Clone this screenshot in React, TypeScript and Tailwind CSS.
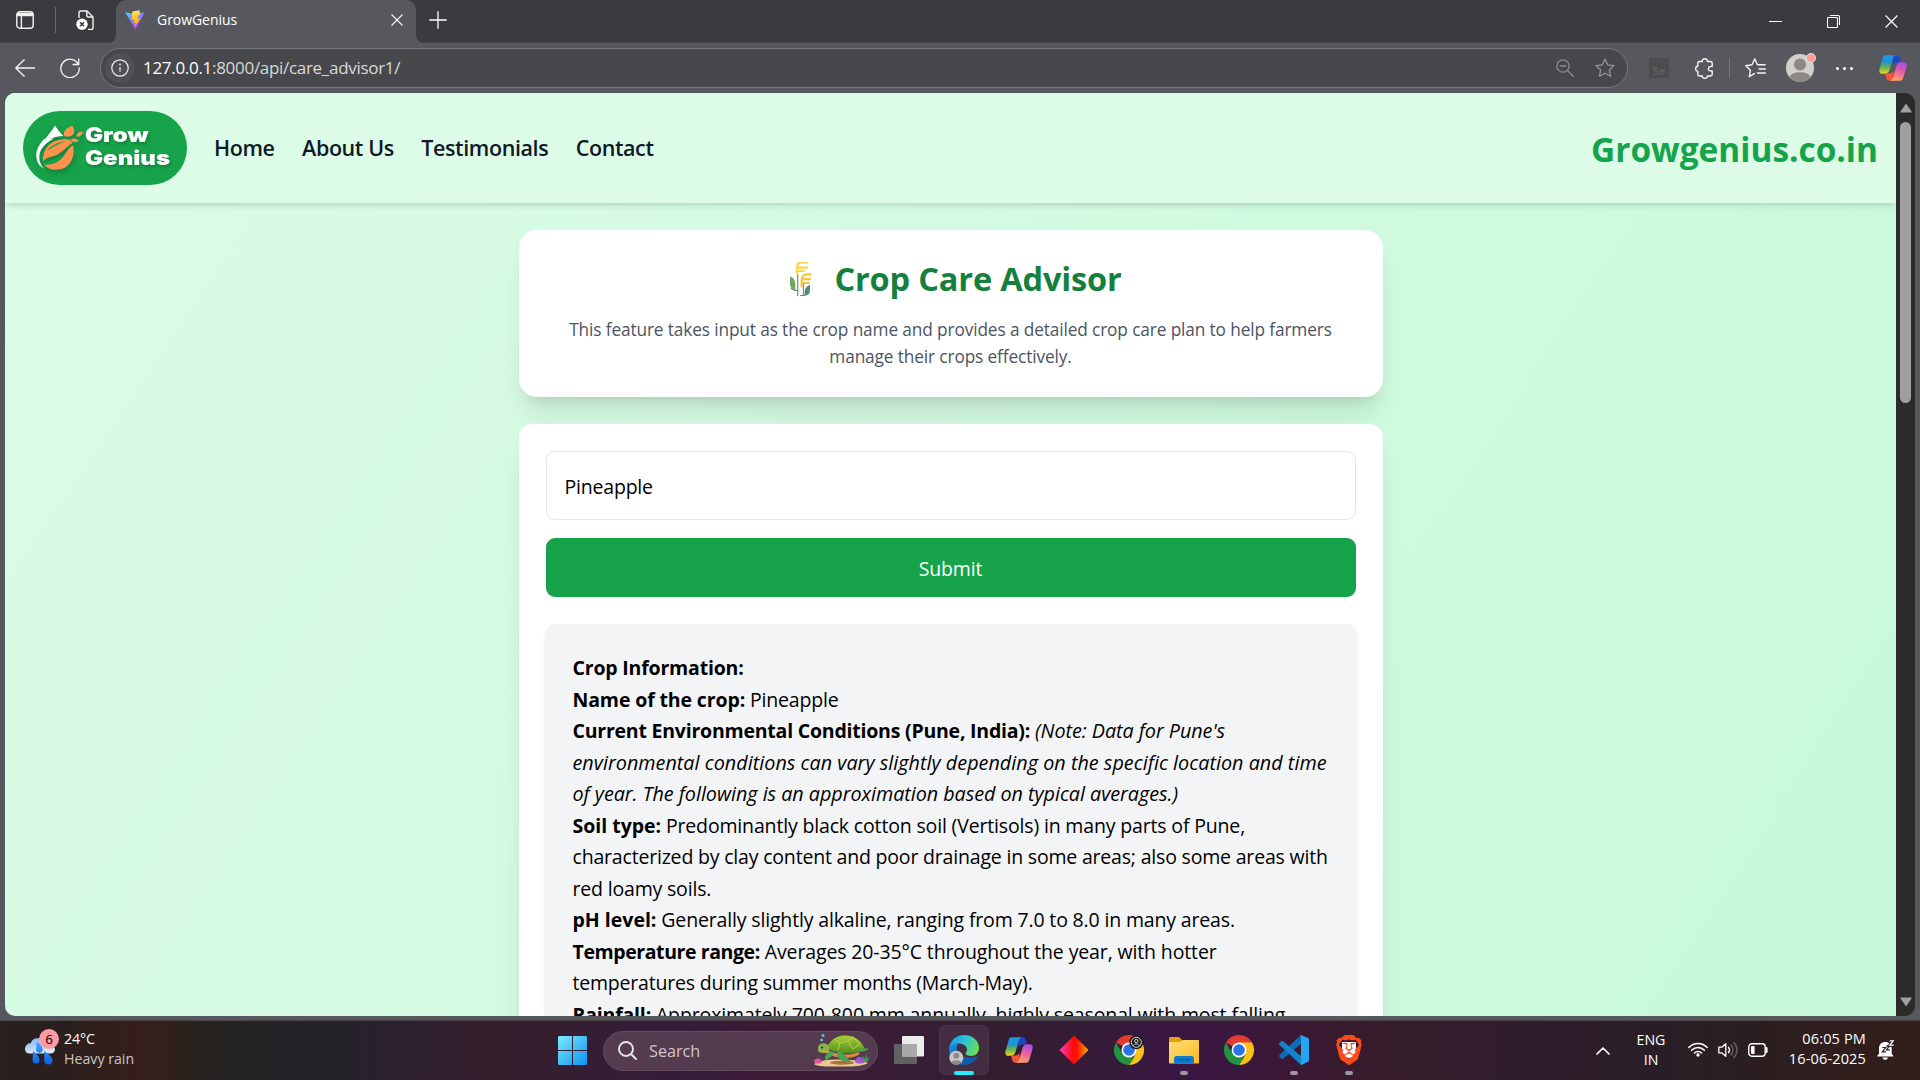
import React, { useId } from "react";
import { SiBrave } from "react-icons/si";

const ui = "font-['Open_Sans','Noto_Sans',sans-serif]";

/* ---------- browser icons ---------- */

const TabActionsIcon = () => (
  <svg viewBox="0 0 18 18" className="h-[18px] w-[18px]" fill="none" stroke="#f2f2f2" strokeWidth="1.4">
    <rect x="0.8" y="0.8" width="16.4" height="16.4" rx="3" />
    <path d="M1 1.8h16v3.4H1z" fill="#f2f2f2" stroke="none" />
    <path d="M5.4 5v12" />
  </svg>
);

const WorkspaceIcon = () => (
  <svg viewBox="0 0 20 21" className="h-[21px] w-5" fill="none" stroke="#f2f2f2" strokeWidth="1.4">
    <path d="M3 8V2.6C3 1.6 3.7 1 4.6 1H11l6 6v10.500c0 1-.7 1.900-1.800 1.900H12" />
    <path d="M10.800 1v4.500c0 .9.600 1.500 1.500 1.500H17" />
    <circle cx="6" cy="14.300" r="5.700" fill="#fff" stroke="none" />
    <path d="M4 12.300l4 4m0-4l-4 4" stroke="#333" />
  </svg>
);

const ViteIcon = () => {
  const id = useId();
  return (
    <svg viewBox="0 0 20 20" className="h-5 w-5">
      <defs>
        <linearGradient id={id + "a"} x1="0" y1="0" x2="0.6" y2="1">
          <stop offset="0" stopColor="#41d1ff" />
          <stop offset="1" stopColor="#bd34fe" />
        </linearGradient>
        <linearGradient id={id + "b"} x1="0.4" y1="0" x2="0.5" y2="1">
          <stop offset="0" stopColor="#ffea83" />
          <stop offset="0.3" stopColor="#ffcf26" />
          <stop offset="1" stopColor="#ffa800" />
        </linearGradient>
      </defs>
      <path d="M0.200 2.300L10 4l9.800-1.700L10.300 19.800z" fill={`url(#${id}a)`} />
      <path d="M14.700.2L7.300 1.500l-.6 8.600 2.600-.5-.8 3.700 2.200-.7-1 4.600 5.700-8.900-3 .5 1-3.500 1.700-.4z" fill={`url(#${id}b)`} />
    </svg>
  );
};

const CloseIcon = ({ className }: { className: string }) => (
  <svg viewBox="0 0 12 12" className={className} stroke="#f5f5f5" strokeWidth="1.2">
    <path d="M.5.5l11 11M11.500.5l-11 11" />
  </svg>
);

const CopilotIcon = () => {
  const id = useId();
  return (
    <svg viewBox="0 0 28 26" className="h-[26px] w-7">
      <defs>
        <linearGradient id={id + "a"} x1="0.3" y1="0" x2="0.3" y2="1">
          <stop offset="0" stopColor="#1b9de8" />
          <stop offset="0.35" stopColor="#1f8fd8" />
          <stop offset="0.65" stopColor="#5fb650" />
          <stop offset="1" stopColor="#f5d21c" />
        </linearGradient>
        <linearGradient id={id + "b"} x1="0.7" y1="0" x2="0.4" y2="1">
          <stop offset="0" stopColor="#a54ee8" />
          <stop offset="0.45" stopColor="#e55aa5" />
          <stop offset="1" stopColor="#ffa36b" />
        </linearGradient>
      </defs>
      <path d="M13 .3h4.500c1.900 0 2.800 1.200 3.300 2.800l1.200 4.400h-4.300c-2 0-3.200 1-3.800 3z" fill="#1c46c8" />
      <path d="M6.800.300H17c-1.700.3-2.500 1.500-3 3l-3.600 12c-.7 2.300-1.800 3.500-4 3.500H3.600C.7 18.800-.3 16.700.5 13.900L3.600 3.500C4.200 1.500 5 .300 6.800.300z" fill={`url(#${id}a)`} />
      <path d="M15 25.700h-4.500c-1.900 0-2.800-1.200-3.300-2.800L6 18.500h4.300c2 0 3.200-1 3.800-3z" fill="#f2573d" />
      <path d="M21.200 25.700H11c1.700-.3 2.500-1.500 3-3l3.600-12c.7-2.300 1.800-3.500 4-3.500h2.800c2.900 0 3.900 2.100 3.100 4.900l-3.100 10.400c-.6 2-1.400 3.200-3.200 3.200z" fill={`url(#${id}b)`} />
    </svg>
  );
};

function TabStrip() {
  return (
    <div className="flex h-[43px] border-b border-[#48494d] bg-[#3a3b3e]">
      <div className="flex w-[108px] items-center pb-[2px] pl-4">
        <TabActionsIcon />
        <div className="ml-[21px] h-[26px] w-px bg-[#6b6c70]" />
        <div className="ml-5">
          <WorkspaceIcon />
        </div>
      </div>
      <div className="flex h-[43px] w-2 items-end bg-[#57585d]">
        <div className="h-[43px] w-2 rounded-br-lg bg-[#3a3b3e]" />
      </div>
      <div className="flex h-[43px] w-[300px] items-center rounded-t-[10px] bg-[#57585d] pb-[3px] pl-[9px] pr-[13px]">
        <ViteIcon />
        <span className="ml-3 flex-1 text-[14px] leading-5 tracking-[-0.05px] text-white">GrowGenius</span>
        <CloseIcon className="h-3 w-3" />
      </div>
      <div className="flex h-[43px] w-2 bg-[#57585d]">
        <div className="h-[43px] w-2 rounded-bl-lg bg-[#3a3b3e]" />
      </div>
      <svg viewBox="0 0 18 18" className="ml-[5px] mt-[11px] h-[18px] w-[18px]" stroke="#fff" strokeWidth="1.300">
        <path d="M9 .3v17.400M.3 9h17.400" />
      </svg>
      <div className="ml-auto flex items-center pr-[22px]">
        <div className="mr-[45px] h-px w-[13px] bg-white" />
        <svg viewBox="0 0 13 13" className="mr-[45px] h-[13px] w-[13px]" fill="none" stroke="#fff" strokeWidth="1.100">
          <rect x="0.500" y="2.500" width="10" height="10" rx="1" />
          <path d="M2.800.5H11c.9 0 1.500.6 1.500 1.500v8" />
        </svg>
        <CloseIcon className="h-[13px] w-[13px]" />
      </div>
    </div>
  );
}

const Star = ({ stroke }: { stroke: string }) => (
  <svg viewBox="0 0 20 20" className="h-5 w-5" fill="none" stroke={stroke} strokeWidth="1.300" strokeLinejoin="round">
    <path d="M10 1l2.700 5.800 6.300.8-4.600 4.400 1.200 6.300L10 15.200l-5.600 3.100L5.600 12 1 7.600l6.300-.8z" />
  </svg>
);

function Toolbar() {
  return (
    <div className="flex h-[50px] items-center bg-[#57585d] pl-[15px]">
      <svg viewBox="0 0 20 18" className="h-[18px] w-5" fill="none" stroke="#f5f5f5" strokeWidth="1.300" strokeLinecap="round" strokeLinejoin="round">
        <path d="M9.200.8L.8 9l8.400 8.200M.8 9h18.700" />
      </svg>
      <svg viewBox="0 0 20 20" className="ml-[25px] h-5 w-5" fill="none" stroke="#f5f5f5" strokeWidth="1.300" strokeLinecap="round">
        <path d="M18.300 6.400A9.200 9.200 0 1 0 19.200 10M18.700.9v5.600h-5.600" />
      </svg>
      <div className="ml-5 flex h-10 w-[1528px] items-center rounded-full border border-[#77787c] bg-[#47484b] pl-1">
        <div className="flex h-[30px] w-[30px] items-center justify-center rounded-full bg-[#505155]">
          <svg viewBox="0 0 18 18" className="h-[18px] w-[18px]" fill="none" stroke="#f0f0f0" strokeWidth="1.200">
            <circle cx="9" cy="9" r="8.200" />
            <path d="M9 8v4.800" />
            <circle cx="9" cy="5.500" r="0.900" fill="#f0f0f0" stroke="none" />
          </svg>
        </div>
        <span className="ml-2 flex-1 text-[17px] leading-6 tracking-[-0.3px] text-[#d8d8da]">
          <span className="text-white">127.0.0.1</span>:8000/api/care_advisor1/
        </span>
        <svg viewBox="0 0 18 18" className="mr-[21px] h-[18px] w-[18px]" fill="none" stroke="#8c8d90" strokeWidth="1.300" strokeLinecap="round">
          <circle cx="7" cy="7" r="6.200" />
          <path d="M4.200 7h5.600M11.600 11.600l5.600 5.600" />
        </svg>
        <div className="mr-3">
          <Star stroke="#95969a" />
        </div>
      </div>
      <div className="ml-[21px] h-5 w-5 bg-[#4c4d4f] pt-[6px] text-center text-[11px] font-bold leading-[13px] text-[#5d5e63]">Se</div>
      <svg viewBox="0 0 20 21" className="ml-[26px] h-[21px] w-5" fill="none" stroke="#f5f5f5" strokeWidth="1.400" strokeLinejoin="round">
        <path d="M4.300 3.500h3c-.2-1.600.8-2.700 2.500-2.700s2.700 1.100 2.500 2.700h3.200c1 0 1.700.7 1.700 1.700v3.300c-2.600-.4-3.800.7-3.800 2.200s1.200 2.600 3.800 2.200v3.400c0 1-.7 1.700-1.700 1.700h-3.200c.2 1.400-.8 2.300-2.500 2.300S7.100 19.400 7.300 18h-3c-1 0-1.500-.7-1.500-1.700v-3C1.300 13.300.700 12.300.700 10.700s.7-2.500 2.100-2.500V5.200c0-1 .5-1.700 1.500-1.700z" />
      </svg>
      <div className="ml-[14px] h-5 w-px bg-[#77787c]" />
      <svg viewBox="0 0 21 20" className="ml-[15px] h-5 w-[21px]" fill="none" stroke="#f5f5f5" strokeWidth="1.400" strokeLinecap="round" strokeLinejoin="round">
        <path d="M9.300 15.600l-5 3 1.100-6.300L.8 7.700l6.200-.9L9.800 1l2.700 5.800h7.700M14 11h6.300M12.500 15h7.800" />
      </svg>
      <div className="relative ml-5 h-7 w-7">
        <svg viewBox="0 0 28 28" className="h-7 w-7">
          <circle cx="14" cy="14" r="14" fill="#d2d0cd" />
          <circle cx="14" cy="10.500" r="6" fill="#8c8885" />
          <path d="M3.300 23c1.500-3 5.300-4.700 10.700-4.700S23.200 20 24.700 23A14 14 0 0 1 3.300 23z" fill="#8c8885" />
        </svg>
        <div className="absolute -right-[2px] -top-[1px] h-[10px] w-[10px] rounded-full border border-[#e8dcdc] bg-[#ff9b98]" />
      </div>
      <div className="ml-[22px] flex gap-[4px]">
        <div className="h-[3px] w-[3px] rounded-full bg-white" />
        <div className="h-[3px] w-[3px] rounded-full bg-white" />
        <div className="h-[3px] w-[3px] rounded-full bg-white" />
      </div>
      <div className="ml-auto mr-[13px]">
        <CopilotIcon />
      </div>
    </div>
  );
}

/* ---------- web page ---------- */

function Logo() {
  return (
    <div className="flex h-[74px] w-[164px] items-center rounded-full bg-[#16a34a] pl-3">
      <svg viewBox="0 0 48 46" className="h-[46px] w-12 shrink-0 drop-shadow-[1px_3px_3px_rgba(0,0,0,0.2)]">
        <path d="M20 .5c2.500 4 5.500 7.500 8.500 10.500C19 11 12 14.500 6 20.500 9 14.500 15 8.500 20 .5z" fill="#fff" />
        <path d="M9 14C4 19.500 1 25 1.300 31c.2 6 3.200 10.200 7.700 12.800-3-3.300-5-7.300-4.700-12.300C4.600 24 10 18 19 13.500z" fill="#fff" />
        <path d="M8.500 30.500C10 20 19 14.500 30 14c4 0 6.500 1.500 7.500 4C30 22.500 27 29 17 31.500c-4 1-7 2-9 5-.3-2-.3-4 .5-6z" fill="#ff914d" />
        <path d="M12 26c4-5.500 10-8.500 19-10-8 3-13 6-19 10z" fill="#16a34a" />
        <path d="M38 20c2 9-1 19-9.500 23.300C22 46 13 45 9 39.500c6-.5 10 .5 16-4.500 5-4.500 7-10.500 13-15z" fill="#ff914d" />
        <path d="M8 38c8-2.500 15-3 19-9-2 6-8 10-17 11z" fill="#16a34a" />
        <path d="M29.500 11C27.500 7 30.500 3.500 37 .5c3 3.500 3.200 8-.5 10.200-2.500 1.300-5 1.300-7 .3z" fill="#ff914d" />
        <path d="M41.500 11.500c.5-4 3-5 6.500-4.700-1 3.500-3 5.500-6.500 4.700zM35.500 14.300c3.500-1.500 6.500-1 8.500 2-4 1.500-6.500 1-8.500-2z" fill="#ff914d" />
      </svg>
      <div className="ml-[2px] mb-[2px] origin-left scale-x-[1.2] font-['Inter',sans-serif] text-[20px] font-black leading-[23px] text-white [text-shadow:1px_2px_3px_rgba(0,0,0,0.22)]">
        <div>Grow</div>
        <div>Genius</div>
      </div>
    </div>
  );
}

const navItems = ["Home", "About Us", "Testimonials", "Contact"];

function SiteHeader() {
  return (
    <header className="relative flex h-[110px] items-center bg-[#dcfce7] pl-[18px] pr-[18px] shadow-[0_4px_7px_-1px_rgba(0,0,0,0.1),0_2px_4px_-2px_rgba(0,0,0,0.1)]">
      <Logo />
      <nav className="ml-[27px] flex gap-[27.500px] text-[21.5px] font-semibold tracking-[-0.4px] text-[#111827]">
        {navItems.map((item) => (
          <a key={item}>{item}</a>
        ))}
      </nav>
      <div className="ml-auto mt-px text-[33.4px] font-bold leading-[40px] text-[#16a34a]">Growgenius.co.in</div>
    </header>
  );
}

const WheatIcon = () => (
  <svg viewBox="0 0 24 34" className="h-[34px] w-6" fill="none">
    <path d="M8.700 12v22M14.500 22v11" stroke="#6aa47c" strokeWidth="1.300" />
    <path d="M8.200 13V5c0-3 2-4.600 5-4.600h6M8.800 5.600h10.200M8.800 9h6.600" stroke="#fcd34d" strokeWidth="2.200" />
    <path d="M12.700 25v-7c0-3 2-5.600 5-5.600h4.800M13 17.200h9M13 21h7.500" stroke="#fbc23c" strokeWidth="2.200" />
    <path d="M1 14.500c3.500 1 5 3.500 5.300 7v6.700C3 27.500 1 25.500 1 22z" fill="#6faa5c" />
    <path d="M21 23c-3.500 1-5 3.500-5.300 7v3.500c3.300-.7 5.300-2.500 5.300-6z" fill="#4f8a80" />
    <path d="M2 26c1 2 3.500 2.500 6.500 2.500M11 33.500c4 .2 8-.5 9.500-3" stroke="#5b9479" strokeWidth="1.200" />
  </svg>
);

const B = ({ children, className = "tracking-[-0.19px]" }: { children: React.ReactNode; className?: string }) => (
  <strong className={"text-[19.5px] font-bold " + className}>{children}</strong>
);
const I = ({ children, className = "tracking-[0.03px]" }: { children: React.ReactNode; className?: string }) => (
  <em className={"text-[19.75px] italic " + className}>{children}</em>
);

function CarePlan() {
  return (
    <div className="mt-[27px] whitespace-nowrap rounded-[9px] bg-[#f3f4f6] px-[27px] pb-[27px] pt-7 text-[19.5px] leading-[31.500px] tracking-[-0.18px] text-black shadow-[0_4px_7px_-1px_rgba(0,0,0,0.1),0_2px_4px_-2px_rgba(0,0,0,0.1)]">
      <p><B>Crop Information:</B></p>
      <p><B className="tracking-[-0.13px]">Name of the crop:</B> Pineapple</p>
      <p><B className="tracking-[-0.22px]">Current Environmental Conditions (Pune, India):</B> <I className="tracking-[-0.04px]">(Note: Data for Pune's</I></p>
      <p><I>environmental conditions can vary slightly depending on the specific location and time</I></p>
      <p><I className="tracking-[-0.03px]">of year. The following is an approximation based on typical averages.)</I></p>
      <p><B className="tracking-[-0.02px]">Soil type:</B> <span className="tracking-[-0.16px]">Predominantly black cotton soil (Vertisols) in many parts of Pune,</span></p>
      <p className="tracking-[-0.19px]">characterized by clay content and poor drainage in some areas; also some areas with</p>
      <p>red loamy soils.</p>
      <p><B className="tracking-[0px]">pH level:</B> <span className="tracking-[-0.16px]">Generally slightly alkaline, ranging from 7.0 to 8.0 in many areas.</span></p>
      <p><B className="tracking-[-0.41px]">Temperature range:</B> <span className="tracking-[-0.13px]">Averages 20-35°C throughout the year, with hotter</span></p>
      <p className="tracking-[-0.2px]">temperatures during summer months (March-May).</p>
      <p><B>Rainfall:</B> <span className="tracking-[-0.13px]">Approximately 700-800 mm annually, highly seasonal with most falling</span></p>
    </div>
  );
}

const cardShadow = "shadow-[0_22px_28px_-6px_rgba(0,0,0,0.1),0_9px_11px_-7px_rgba(0,0,0,0.1)]";

function Page() {
  return (
    <div className="h-[2840px] bg-linear-to-br from-[#dcfce7] to-[#bbf7d0]">
      <SiteHeader />
      <main className="mx-auto mt-[27px] w-[864px]">
        <section className={"h-[167px] rounded-[18px] bg-white pt-[27px] text-center " + cardShadow}>
          <h1 className="flex h-[43px] items-center justify-center gap-[21px] pl-[10px] text-[32.5px] font-bold tracking-[-0.16px] text-[#15803d]">
            <WheatIcon />
            <span className="mt-[2px]">Crop Care Advisor</span>
          </h1>
          <p className="mt-4 text-[17.250px] leading-[27px] tracking-[-0.12px] text-[#4b5563]">
            This feature takes input as the crop name and provides a detailed crop care plan to help farmers
            <br />
            manage their crops effectively.
          </p>
        </section>
        <section className={"mt-[27px] h-[900px] rounded-[13.5px] bg-white p-[27px] " + cardShadow}>
          <div className="flex h-[69px] items-center rounded-[9px] border border-[#e5e7eb] pl-[18px] pt-[2px] text-[19.5px] tracking-[-0.2px] text-black">
            Pineapple
          </div>
          <button className="mt-[18px] block h-[59px] w-full rounded-[9px] bg-[#16a34a] pt-[3px] text-[19.5px] tracking-[-0.17px] text-white">
            Submit
          </button>
          <CarePlan />
        </section>
      </main>
    </div>
  );
}

function Scrollbar() {
  return (
    <div className="flex w-[19px] flex-col items-center bg-[#2b2b2b]">
      <svg viewBox="0 0 12 10" className="mt-[10px] h-[10px] w-3">
        <path d="M6 .5L11.500 8.500c.3.600 0 1-.6 1H1.100c-.6 0-.9-.4-.6-1z" fill="#9f9f9f" />
      </svg>
      <div className="mt-[9px] h-[281px] w-[11px] rounded-full bg-[#9f9f9f]" />
      <svg viewBox="0 0 12 10" className="mb-[9px] mt-auto h-[10px] w-3">
        <path d="M6 9.500L.5 1.500c-.3-.6 0-1 .6-1h9.800c.6 0 .9.4.6 1z" fill="#9f9f9f" />
      </svg>
    </div>
  );
}

/* ---------- taskbar ---------- */

const WeatherIcon = () => {
  const id = useId();
  return (
    <svg viewBox="0 0 30 32" className="h-8 w-[30px]">
      <defs>
        <linearGradient id={id + "c"} x1="0" y1="0" x2="0.3" y2="1">
          <stop offset="0" stopColor="#7fb0f2" />
          <stop offset="1" stopColor="#dbe7fa" />
        </linearGradient>
        <linearGradient id={id + "d"} x1="0" y1="0" x2="0" y2="1">
          <stop offset="0" stopColor="#47a0ff" />
          <stop offset="1" stopColor="#0b62e6" />
        </linearGradient>
      </defs>
      <path d="M6 10C7 5.500 11 5 15 5h10l5 11c0 3-2 4.500-5 4.500H5C2 20.500 0 19 0 16s2.500-6 6-6z" fill={`url(#${id}c)`} />
      <path d="M11.500 9c4 2 6 4.500 6 7.500a3.200 3.200 0 0 1-6.400 0zM8 18c4 3 6.600 6 6.600 9a3.500 3.500 0 0 1-7 0zM19 18c5 3.500 8.500 6 8.500 9.500a4 4 0 0 1-8.200 0z" fill={`url(#${id}d)`} />
    </svg>
  );
};

const WindowsIcon = () => {
  const id = useId();
  return (
    <svg viewBox="0 0 29 29" className="h-[29px] w-[29px]">
      <linearGradient id={id} x1="0" y1="0" x2="29" y2="29" gradientUnits="userSpaceOnUse">
        <stop offset="0" stopColor="#7beefd" />
        <stop offset="1" stopColor="#0e90f0" />
      </linearGradient>
      <path d="M1 0h13v14H0V1zM15 0h13l1 1v13H15zM0 15h14v14H1l-1-1zM15 15h14v13l-1 1H15z" fill={`url(#${id})`} />
    </svg>
  );
};

const TurtleArt = () => {
  const id = useId();
  return (
    <svg viewBox="0 0 56 34" className="h-[34px] w-14">
      <linearGradient id={id} x1="0" y1="0" x2="0" y2="1">
        <stop offset="0" stopColor="#a9cf3a" />
        <stop offset="1" stopColor="#4f8f22" />
      </linearGradient>
      <path d="M0 30c6-4 16-5 28-4.500S50 27 54 29c-4 3-14 3.500-27 3.500S4 33 0 30z" fill="#edc78e" />
      <ellipse cx="28" cy="28.700" rx="12" ry="2" fill="#a8723f" />
      <path d="M12 16c8 2 18 8 32 2l2 2c-8 6-24 5-34-1z" fill="#d98a3c" />
      <path d="M13 13C18 3 26 1 33 1.500 42 2 48 8 51 15c-6 5-30 7-38-2z" fill={`url(#${id})`} />
      <path d="M20 5l6 4 8-2 6-4M26 9l-2 7M34 7l5 8M40 4l6 6-7 5" fill="none" stroke="#c6d544" strokeWidth="0.900" />
      <path d="M24 17c5 1 8 6 13 10.500-6 1.500-13-1-14-8zM44 15c4 0 9 0 10-1.500 1 3-5 5-10 3.500zM16 17c-4 3-6 6-4.500 9C16 25 19 21 20 18z" fill="#46a352" />
      <path d="M4 13c1-4 6-5 10-2 2 1.500 2 5 0 7-3 2-9 1-10-1z" fill="#8db04a" />
      <circle cx="8" cy="13.500" r="1.100" fill="#20351a" />
      <path d="M9 17c3 1.500 4 1.500 6 0" stroke="#e59a4a" strokeWidth="1.500" fill="none" />
      <circle cx="9" cy="1.600" r="1.500" fill="#56c8e8" />
      <circle cx="7.600" cy="6" r="1.300" fill="#6ad6f2" />
      <path d="M0 28c-.3-4 7-5 8 0-2 2-6 2-8 0z" fill="#e0559a" />
      <path d="M41 28c0-6 8-7 10 0-3 2-7 2-10 0z" fill="#a05ccd" />
      <path d="M50 27l-2-6 3 4 1-6 1 6 3-3-3 6z" fill="#39a35c" />
    </svg>
  );
};

const TaskViewIcon = () => (
  <svg viewBox="0 0 30 28" className="h-7 w-[30px]">
    <rect x="0" y="8" width="23" height="20" rx="1" fill="#5f6163" />
    <rect x="8" y="0" width="22" height="20.500" rx="1" fill="#ececec" />
    <path d="M8 8h15v12.500H8z" fill="#a9a9ab" />
  </svg>
);

const EdgeIcon = () => {
  const id = useId();
  return (
    <svg viewBox="0 0 30 30" className="h-[30px] w-[30px]">
      <defs>
        <linearGradient id={id + "a"} x1="0" y1="0.3" x2="1" y2="0.6">
          <stop offset="0" stopColor="#1e9be8" />
          <stop offset="0.500" stopColor="#2cc3d5" />
          <stop offset="1" stopColor="#6ee04a" />
        </linearGradient>
        <linearGradient id={id + "b"} x1="0" y1="0" x2="1" y2="1">
          <stop offset="0" stopColor="#1b8fe0" />
          <stop offset="1" stopColor="#0c4fa0" />
        </linearGradient>
      </defs>
      <path d="M0 14C1 5.500 7 0 15 0c9 0 15 6 15 13 0 5-3.500 8-8 8-3.500 0-5.500-1-5.500-2.500 0-1 1.500-1.500 1.500-4C18 11 14 8.500 9.500 8.500 5 8.500 1 11 0 14z" fill={`url(#${id}a)`} />
      <path d="M0 15c0-4 4-7 9.500-6.500C6 12 8 19 13.500 21.500 19 24 25 22.500 28.500 21 26 26.500 21 30 15 30 6.500 30 0 23 0 15z" fill={`url(#${id}b)`} />
      <path d="M10.500 17c0 7 8 10 18 4-3 6-8 8-13 7.500-4-1-7-7-5-11.500z" fill="#0d5cab" />
      <circle cx="7.300" cy="22.800" r="7" fill="#c9c8c6" />
      <circle cx="7.300" cy="20.700" r="2.900" fill="#8c8885" />
      <path d="M2.300 27.500c1-3 9-3 10 0a7 7 0 0 1-10 0z" fill="#8c8885" />
    </svg>
  );
};

const DiamondIcon = () => {
  const id = useId();
  return (
    <svg viewBox="0 0 30 30" className="h-[30px] w-[30px]">
      <linearGradient id={id} x1="0" y1="0" x2="1" y2="0">
        <stop offset="0" stopColor="#ff3cc0" />
        <stop offset="0.450" stopColor="#ff0a10" />
        <stop offset="0.600" stopColor="#ff1000" />
        <stop offset="1" stopColor="#ffb000" />
      </linearGradient>
      <path d="M15 .5L29.500 15 15 29.500.5 15z" fill={`url(#${id})`} />
    </svg>
  );
};

const ChromeIcon = ({ badge }: { badge?: boolean }) => (
  <svg viewBox="0 0 30 30" className="h-[30px] w-[30px] overflow-visible">
    <path d="M15 15L2 7.500A15 15 0 0 1 28 7.500z" fill="#e33b2e" />
    <path d="M15 7.500h13A15 15 0 0 1 15 30l6.500-11.300z" fill="#fbc116" />
    <path d="M2 7.500l6.500 11.300L15 22.500l6 -1L15 30A15 15 0 0 1 2 7.500z" fill="#229342" />
    <circle cx="15" cy="15" r="7.500" fill="#fff" />
    <circle cx="15" cy="15" r="5.800" fill="#2a73e8" />
    {badge && (
      <g>
        <circle cx="22.300" cy="7.300" r="7" fill="#1d1d1f" />
        <circle cx="22.300" cy="7.300" r="5" fill="none" stroke="#d5d5d5" strokeWidth="1" />
        <circle cx="22.300" cy="6" r="1.700" fill="none" stroke="#d5d5d5" />
        <path d="M19.300 10.600c1-2.200 5-2.200 6 0" fill="none" stroke="#d5d5d5" />
      </g>
    )}
  </svg>
);

const FolderIcon = () => {
  const id = useId();
  return (
    <svg viewBox="0 0 30 27" className="h-[27px] w-[30px]">
      <linearGradient id={id} x1="0" y1="0" x2="1" y2="1">
        <stop offset="0" stopColor="#ffdf7a" />
        <stop offset="1" stopColor="#fbb81c" />
      </linearGradient>
      <path d="M0 1.500C0 .6.600 0 1.500 0H10l4 4h14v5H0z" fill="#e3a00a" />
      <path d="M0 5h11l3-2h15c.6 0 1 .4 1 1v21.500c0 .6-.4 1-1 1H1c-.6 0-1-.4-1-1z" fill={`url(#${id})`} />
      <path d="M5 26.500V22c0-1.800 1-3 2.800-3h14.400c1.800 0 2.800 1.200 2.800 3v4.500z" fill="#0c7bd0" />
      <path d="M9 22.700h12" stroke="#0a4f8f" strokeWidth="1.200" strokeLinecap="round" />
    </svg>
  );
};

const CodeIcon = () => (
  <svg viewBox="0 0 30 30" className="h-[30px] w-[30px]">
    <path d="M22 0v9L4 23.800c-.5.400-1.100.4-1.600 0L.500 22c-.6-.6-.6-1.300 0-1.900z" fill="#0b6fb8" />
    <path d="M22 30v-9L4 6.200c-.5-.4-1.100-.4-1.600 0L.5 8c-.6.6-.6 1.300 0 1.900z" fill="#1584cf" />
    <path d="M21.500.2c.4-.2.900-.2 1.300 0l6 2.800c.7.400 1.200 1 1.200 1.900v20.200c0 .9-.5 1.500-1.200 1.900l-6 2.800c-.4.200-.9.200-1.300 0L22 29V1z" fill="#27a5f3" />
  </svg>
);

const BraveIcon = () => (
  <div className="relative flex h-[30px] w-[26px] items-center justify-center">
    <div className="absolute left-[6px] top-[7px] h-[16px] w-[14px] rounded-b-lg bg-white" />
    <SiBrave className="relative h-[30px] w-[30px] shrink-0 text-[#fb4a1c]" />
  </div>
);

const apps: { icon: React.ReactNode; state: "none" | "active" | "open" }[] = [
  { icon: <TaskViewIcon />, state: "none" },
  { icon: <EdgeIcon />, state: "active" },
  { icon: <CopilotIcon />, state: "none" },
  { icon: <DiamondIcon />, state: "none" },
  { icon: <ChromeIcon badge />, state: "none" },
  { icon: <FolderIcon />, state: "open" },
  { icon: <ChromeIcon />, state: "none" },
  { icon: <CodeIcon />, state: "open" },
  { icon: <BraveIcon />, state: "open" },
];

function Taskbar() {
  return (
    <footer className="flex h-[60px] items-center border-t border-[#484245] bg-[linear-gradient(90deg,#272120_0px,#2b1f1d_70px,#371e1b_145px,#26221f_205px,#222426_270px,#25222a_350px,#2e1f31_420px,#361e2b_490px,#341e30_550px,#351d3a_680px,#3e1a35_780px,#381d36_900px,#331d30_1010px,#351b3a_1110px,#3a1644_1180px,#3b1838_1270px,#371c2a_1380px,#2e1d2c_1530px,#291f24_1700px,#2e1e1e_1800px,#331e1b_1920px)]">
      <div className="flex w-[558px] items-center pb-[3px] pl-[25px]">
        <div className="relative h-8 w-[30px]">
          <WeatherIcon />
          <div className="absolute -top-1 left-[14px] flex h-5 w-5 items-center justify-center rounded-full bg-[#ff99a4] text-[13.5px] leading-5 text-black">6</div>
        </div>
        <div className="ml-[9px] text-[14.2px] leading-5 text-white">
          <div className="tracking-[-0.1px]">24°C</div>
          <div className="text-[#c9c5c4]">Heavy rain</div>
        </div>
      </div>
      <WindowsIcon />
      <div className="ml-4 flex h-10 w-[275px] items-center rounded-full border border-[#654a60] bg-[#543b50] pl-[14px]">
        <svg viewBox="0 0 19 19" className="h-[19px] w-[19px]" fill="none" stroke="#e8e4e8" strokeWidth="1.900" strokeLinecap="round">
          <circle cx="8" cy="8" r="7" />
          <path d="M13 13l5 5" />
        </svg>
        <span className="ml-3 mt-px flex-1 text-[16.2px] text-[#cfc6cd]">Search</span>
        <div className="mr-[7px]">
          <TurtleArt />
        </div>
      </div>
      <div className="ml-[6px] flex gap-[5px] pb-px">
        {apps.map((app, i) => (
          <div
            key={i}
            className={
              "relative flex h-[50px] w-[50px] items-center justify-center rounded-md border " +
              (app.state === "active" ? "border-[#4b3547] bg-[#432d42]" : "border-transparent")
            }
          >
            {app.icon}
            {app.state === "active" && <div className="absolute -bottom-px h-1 w-5 rounded-full bg-[#22f0ff]" />}
            {app.state === "open" && <div className="absolute -bottom-px h-1 w-2 rounded-full bg-[#a094a3]" />}
          </div>
        ))}
      </div>
      <svg viewBox="0 0 14 8" className="ml-[222px] h-2 w-[14px]" fill="none" stroke="#fff" strokeWidth="1.700" strokeLinecap="round" strokeLinejoin="round">
        <path d="M1 7l6-6 6 6" />
      </svg>
      <div className="ml-[21px] w-10 pb-px text-center text-[14.2px] leading-5 text-white">
        <div>ENG</div>
        <div>IN</div>
      </div>
      <svg viewBox="0 0 20 15" className="ml-[17px] mb-[2px] h-[15px] w-5" fill="none" stroke="#fff" strokeWidth="1.500" strokeLinecap="round">
        <path d="M.8 5.500c5-5.500 13.400-5.500 18.400 0M3.600 8.300c3.700-3.800 9.100-3.800 12.800 0M6.500 11c2-2.100 5-2.100 7 0" />
        <circle cx="10" cy="13" r="1.700" fill="#fff" stroke="none" />
      </svg>
      <svg viewBox="0 0 20 18" className="ml-[10px] mb-[2px] h-[18px] w-5" fill="none" stroke="#fff" strokeWidth="1.300" strokeLinecap="round" strokeLinejoin="round">
        <path d="M.8 6.200v5.600h3l4 3.500V2.700l-4 3.500z" />
        <path d="M10.500 6.300c1.300 1.600 1.300 3.800 0 5.400" />
        <path d="M13 4c2.500 2.800 2.500 7.200 0 10M15.800 1.500c4.200 4.300 4.200 10.700 0 15" stroke="#6d6467" />
      </svg>
      <svg viewBox="0 0 20 14" className="ml-[10px] mb-[2px] h-[14px] w-5" fill="none" stroke="#fff" strokeWidth="1.400">
        <rect x="0.800" y="0.800" width="16.400" height="12.400" rx="3" />
        <rect x="3" y="3" width="3.600" height="8" rx="1" fill="#fff" stroke="none" />
        <path d="M18.700 5v4" strokeWidth="1.800" strokeLinecap="round" />
      </svg>
      <div className="ml-auto pb-[3px] text-right text-[14.5px] leading-5 tracking-[0.15px] text-white">
        <div>06:05 PM</div>
        <div>16-06-2025</div>
      </div>
      <div className="ml-[11px] mr-[25px] h-[21px] w-[18px]">
        <svg viewBox="0 0 18 20" className="h-5 w-[18px]">
          <path d="M2 14V8.500C2 4.500 4.500 2 8.200 2s6.500 2.500 6.500 6.500V14l1.500 1.500v1H.300v-1z" fill="#fff" />
          <path d="M5.500 17.500h5.400c-.3 1.500-1.300 2.300-2.700 2.300s-2.400-.8-2.700-2.300z" fill="#fff" />
          <path d="M5.300 7.500h3.400l-3.400 4.300h3.700M9.500 5.800h3l-3 4h3.300" fill="none" stroke="#2e1e1e" strokeWidth="1.200" />
          <path d="M12.700.8h3.600l-3.600 4.400h4" fill="none" stroke="#2e1e1e" strokeWidth="3" />
          <path d="M12.700.8h3.600l-3.600 4.400h4" fill="none" stroke="#fff" strokeWidth="1.200" />
        </svg>
      </div>
    </footer>
  );
}

export default function App() {
  return (
    <div className={"flex h-[1080px] w-[1920px] flex-col overflow-hidden bg-[#57585d] " + ui}>
      <TabStrip />
      <Toolbar />
      <div className="mx-[5px] flex h-[923px] overflow-hidden rounded-[10px]">
        <div className="h-full flex-1 overflow-hidden">
          <Page />
        </div>
        <Scrollbar />
      </div>
      <div className="h-1 shrink-0" />
      <Taskbar />
    </div>
  );
}
